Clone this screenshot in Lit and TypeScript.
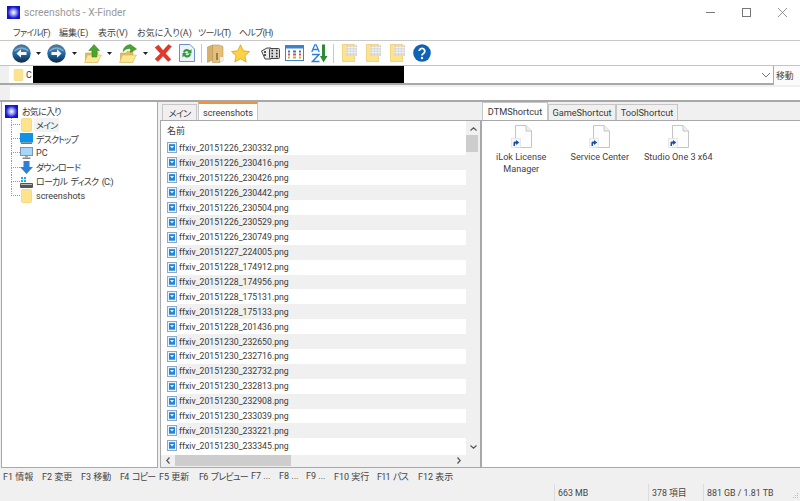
import { LitElement, html, css, svg } from "lit";
import { customElement } from "lit/decorators.js";

const files = [
  "20151226_230332","20151226_230416","20151226_230426","20151226_230442","20151226_230504",
  "20151226_230529","20151226_230749","20151227_224005","20151228_174912","20151228_174956",
  "20151228_175131","20151228_175133","20151228_201436","20151230_232650","20151230_232716",
  "20151230_232732","20151230_232813","20151230_232908","20151230_233039","20151230_233221","20151230_233345",
];

const kanaCls = (s: string) => (/[\u30a0-\u30ff]/.test(s) ? "kana" : "");

const folder = (w = 11, h = 14) => html`<svg width=${w} height=${h} viewBox="0 0 11 14"><rect x=".5" y=".5" width="10" height="13" rx="1" fill="#fde38c" stroke="#f4d98e"/></svg>`;
const logo = html`<svg width="13" height="13" viewBox="0 0 13 13"><defs><radialGradient id="lg"><stop offset="0" stop-color="#fff"/><stop offset=".35" stop-color="#a9b0ff"/><stop offset=".85" stop-color="#2020d8"/><stop offset="1" stop-color="#1414c0"/></radialGradient></defs><rect width="13" height="13" fill="url(#lg)"/></svg>`;
const navBtn = (dir: number) => html`<svg width="19" height="19" viewBox="0 0 19 19"><defs><linearGradient id="nb" x1="0" y1="0" x2="0" y2="1"><stop offset="0" stop-color="#54718c"/><stop offset=".25" stop-color="#3f7fb4"/><stop offset=".6" stop-color="#1d5f98"/><stop offset="1" stop-color="#10283f"/></linearGradient></defs><circle cx="9.500" cy="9.500" r="9.200" fill="url(#nb)"/><path d="M2.500 7Q9.500 1 16.500 7" fill="none" stroke="#b4cde0" stroke-width="1.300" opacity=".6"/><g transform=${dir < 0 ? "" : "rotate(180 9.500 9.500)"}><path d="M4.500 9.500L9 5.300V7.900H14.500V11.100H9V13.700Z" fill="#f4f8fc"/></g></svg>`;
const caret = html`<svg width="5" height="3" viewBox="0 0 5 3"><path d="M0 0H5L2.500 3Z" fill="#222"/></svg>`;
const folderArrow = (up: boolean) => html`<svg width="18" height="19" viewBox="0 0 18 19"><path d="M1.500 9H7L8 7.500H14V18H1.500Z" fill="#e8bf58" stroke="#b8953f" stroke-width=".5"/><path d="M3.500 11H17.500L13.500 18.500H.5Z" fill="#fbe894" stroke="#cfab4a" stroke-width=".5"/>${up ? svg`<path d="M10 .5L15.500 6.500H12.800V13H8V6.500H4.800Z" fill="#4aa52d" stroke="#2e7d1b" stroke-width=".5"/>` : svg`<path d="M17.500 5L11.500 .5Q5 1 4 7.500Q7 4 11.500 4.500V8.500Z" fill="#4aa52d" stroke="#2e7d1b" stroke-width=".5"/>`}</svg>`;
const gridFolder = html`<svg width="15" height="18" viewBox="0 0 15 18"><rect x=".5" y=".5" width="12" height="17" fill="#fde38c" stroke="#f0d488"/><rect x="4.500" y="1" width="10.500" height="11" fill="#d2d2d2"/><path d="M7 1V12M10 1V12M13 1V12M4.500 3.500H15M4.500 6H15M4.500 8.500H15" stroke="#f3f3f3" stroke-width=".8"/></svg>`;
const png = html`<svg width="10" height="11" viewBox="0 0 10 11"><rect x=".5" y=".5" width="9" height="10" fill="#eef4fa" stroke="#8fa9c4"/><rect x="2" y="2.200" width="6" height="6.500" fill="#1f86de"/><path d="M3 4H7L5 6.500Z" fill="#e8f4ff"/></svg>`;
const shortcut = html`<svg width="21" height="23" viewBox="0 0 21 23"><path d="M4.500 .5H15L20.500 6V22.500H4.500Z" fill="#fdfdfd" stroke="#c4c4c4"/><path d="M15 .5V6H20.500" fill="#f0f0f0" stroke="#c4c4c4"/><rect x=".5" y="13.500" width="9" height="9" fill="#f6f6f6" stroke="#dcdcdc" stroke-width=".6"/><path d="M2.500 21V17.800Q2.500 16.500 4.300 16.500H5V15L8.300 17.500L5 20V18.500H4.500Q4 18.500 4 19.300V21Z" fill="#18509f"/></svg>`;

const stop = html`<svg width="18" height="18" viewBox="0 0 18 18"><path d="M1 3.500L4.500 1L9 6.500L14.500 .5L17.500 2.500L11.500 9.500L17 15.500L14 17.500L9 12L4 17.500L1 15L6.500 9.500Z" fill="#e1382a" stroke="#b8281c" stroke-width=".4"/></svg>`;
const refresh = html`<svg width="16" height="18" viewBox="0 0 16 18"><path d="M.5 .5H11L15.500 5V17.500H.5Z" fill="#eef3fb" stroke="#6d8fc7"/><path d="M4 8A4 4 0 0 1 11 6.500L12.500 5V9.500H8L9.500 8A2.400 2.400 0 0 0 5.500 9Z" fill="#2f9b34"/><path d="M12 10.500A4 4 0 0 1 5 12L3.500 13.500V9H8L6.500 10.500A2.400 2.400 0 0 0 10.500 9.500Z" fill="#2f9b34"/></svg>`;
const book = html`<svg width="17" height="19" viewBox="0 0 17 19"><path d="M.5 3L5.500 1V16L.5 18.500Z" fill="#d8b06a" stroke="#ad8a4a" stroke-width=".5"/><path d="M5.500 1H12L16 2.500V17H13V18.500H5.500Z" fill="#e3c07c" stroke="#ad8a4a" stroke-width=".5"/><path d="M10 9V16" stroke="#6f5528" stroke-width="1.200"/><rect x="13" y="13" width="3.500" height="4" fill="#eee"/></svg>`;
const star = html`<svg width="19" height="19" viewBox="0 0 19 19"><path d="M9.500 .8L12.300 6.800L18.500 7.500L13.900 11.700L15.200 18L9.500 14.800L3.800 18L5.100 11.700L.5 7.500L6.700 6.800Z" fill="#fcd243" stroke="#d99f1d" stroke-width=".8"/></svg>`;
const dice = html`<svg width="19" height="13" viewBox="0 0 19 13"><path d="M.5 4L6 1H10V12H4Z" fill="#eee" stroke="#444"/><rect x="8.500" y="1.500" width="10" height="10" rx="1" fill="#d8d8d8" stroke="#444"/><path d="M10.500 3.500H12M15 3.500H16.500M10.500 6.500H12M15 6.500H16.500M10.500 9.500H12M15 9.500H16.500M3 5H5M3 8H5" stroke="#222" stroke-width="1.500"/></svg>`;
const grid = html`<svg width="19" height="16" viewBox="0 0 19 16"><rect x=".5" y=".5" width="18" height="15" fill="#fff" stroke="#3f82c8"/><rect x=".5" y=".5" width="18" height="3" fill="#3f82c8"/><path d="M3 6.500H5M8 6.500H11M14 6.500H16" stroke="#5b6fb5" stroke-width="2"/><path d="M3 9.500H5M8 9.500H11M14 9.500H16" stroke="#d0564a" stroke-width="2"/><path d="M3 12.500H5M8 12.500H11M14 12.500H16" stroke="#d7a92f" stroke-width="2"/></svg>`;
const az = html`<svg width="17" height="19" viewBox="0 0 17 19"><path d="M.8 8L3.800 .8H5.200L8.200 8M2.200 5.500H6.800" fill="none" stroke="#2f7fd8" stroke-width="1.300"/><path d="M1 10.500H8L1.500 17.500H8.500" fill="none" stroke="#2f7fd8" stroke-width="1.500"/><path d="M11 .5H14V12H16.500L12.500 18.500L9 12H11Z" fill="#2e8b33"/></svg>`;
const help = html`<svg width="18" height="18" viewBox="0 0 18 18"><circle cx="9" cy="9" r="8.800" fill="#0f62b4"/><path d="M6.200 7A2.800 2.800 0 1 1 10.500 9.500Q9 10.300 9 11.500" fill="none" stroke="#fff" stroke-width="1.800"/><circle cx="9" cy="14" r="1.200" fill="#fff"/></svg>`;
const sep = html`<div class="sep"></div>`;

/* toolbar items with the x at which each begins */
const toolItems: [unknown, number, number][] = [
  [navBtn(-1), 12, 19], [caret, 36, 5], [navBtn(1), 47, 19], [caret, 72, 5],
  [folderArrow(true), 84, 18], [caret, 107, 5], [folderArrow(false), 119, 18], [caret, 143, 5],
  [stop, 154, 18], [refresh, 179, 16], [sep, 201, 1], [book, 207, 17], [star, 231, 19],
  [dice, 261, 19], [grid, 285, 19], [az, 311, 17], [sep, 333, 1],
  [gridFolder, 342, 15], [gridFolder, 366, 15], [gridFolder, 390, 15], [help, 413, 18],
];
const fkeys: [string, number][] = [
  ["F1 情報", 39],["F2 変更", 39],["F3 移動", 39],["F4 コピー", 39],["F5 更新", 40],["F6 プレビュー", 52],
  ["F7 ...", 28],["F8 ...", 27],["F9 ...", 28],["F10 実行", 43],["F11 パス", 41],["F12 表示", 40],
];
const menus: [string, number][] = [["ファイル(F)", 46],["編集(E)", 39],["表示(V)", 39],["お気に入り(A)", 61],["ツール(T)", 41],["ヘルプ(H)", 40]];

const ARROW = {
  up: svg`<path d="M.5 3.500L3.500 .8L6.500 3.500" fill="none" stroke="#555" stroke-width="1.200"/>`,
  down: svg`<path d="M.5 .5L3.500 3.200L6.500 .5" fill="none" stroke="#555" stroke-width="1.200"/>`,
  left: svg`<path d="M3.500 .5L.8 3.500L3.500 6.500" fill="none" stroke="#555" stroke-width="1.200"/>`,
  right: svg`<path d="M.5 .5L3.200 3.500L.5 6.500" fill="none" stroke="#555" stroke-width="1.200"/>`,
};

@customElement("app-root")
export class AppRoot extends LitElement {
  static styles = css`
    :host { display: block; width: 800px; height: 501px; background: #f0f0f0; overflow: hidden;
      font-family: Roboto, "Noto Sans CJK JP", sans-serif; font-size: 8.8px; color: #3a3a3a; font-feature-settings: "palt"; }
    svg { display: block; flex: none; }
    .kana { letter-spacing: -.8px; word-spacing: 2px; }
    .title { height: 24px; background: #fff; display: flex; align-items: center; padding-left: 7px; gap: 4px; color: #999; font-size: 10.300px; }
    .winbtns { margin-left: auto; display: flex; align-items: center; padding-right: 13px; gap: 27px; }
    .menu { height: 16px; background: #fff; display: flex; align-items: center; padding-left: 13px; color: #444; border-bottom: 1px solid #c8c8c8; font-size: 9px; white-space: nowrap; }
    .tools { height: 24px; background: #fff; display: flex; align-items: center; }
    .sep { width: 1px; height: 19px; background: #c8c8c8; }
    .addr { height: 20px; border-top: 1px solid #c4c4c4; border-bottom: 2px solid #a8a8a8; display: flex; box-sizing: border-box; padding-left: 9px; }
    .addr-main { flex: 1; background: #fff; display: flex; align-items: center; padding-left: 4px; min-width: 0; }
    .cdrive { margin-left: 2px; width: 7px; }
    .black { width: 371px; height: 17px; background: #000; flex: none; }
    .drop { margin-left: auto; margin-right: 3px; }
    .go { width: 27px; border-left: 1px solid #a8a8a8; margin-bottom: -2px; display: flex; align-items: center; padding-left: 2px; box-sizing: border-box; color: #444; background: #fbfbfb; }
    .addr2 { height: 15px; padding: 2px 0 0 10px; box-sizing: border-box; }
    .addr2 div { height: 13px; background: #fff; }
    .hr { height: 2px; background: #a8a8a8; }
    .panes { display: flex; height: 366px; padding-left: 1px; }
    .tree { background: #fff; border: 1px solid #a8a8a8; border-top: none; padding-top: 3px; box-sizing: border-box; height: 366px; width: 157px; font-size: 9px; }
    .root { display: flex; align-items: center; gap: 4px; height: 13px; margin-left: 3px; }
    .root span { letter-spacing: -.8px; }
    .kid { height: 14.200px; margin-left: 9px; display: flex; align-items: center; }
    .branch { width: 9px; align-self: stretch; display: grid; grid-template-rows: 1fr 1fr; flex: none; }
    .branch i { border-left: 1px dotted #999; }
    .branch i:first-child { border-bottom: 1px dotted #999; }
    .kid.last .branch i:last-child { border-left: none; }
    .ico { width: 13px; margin-right: 1px; display: flex; justify-content: center; flex: none; }
    .lbl { padding: 0 2px; height: 14px; display: flex; align-items: center; white-space: pre; }
    .lbl.sel { background: #f2f2f2; }
    .center { width: 321px; margin-left: 2px; }
    .tabs { display: flex; height: 18px; align-items: flex-end; font-size: 9.200px; }
    .center .tabs { padding-left: 2px; gap: 1px; }
    .tab { height: 16px; display: flex; align-items: center; justify-content: center; border: 1px solid #c6c6c6; border-bottom: none; box-sizing: border-box; }
    .tab.on { background: #fff; height: 18px; }
    .center .tab.on { border-top: 2px solid #f0913c; }
    .list { border: 1px solid #a8a8a8; background: #fff; height: 348px; box-sizing: border-box; display: flex; }
    .left-col { flex: 1; min-width: 0; display: flex; flex-direction: column; }
    .rows { height: 333.500px; overflow: hidden; font-size: 8.700px; }
    .hdr { height: 19.500px; display: flex; align-items: center; padding-left: 6px; font-size: 9px; }
    .row { height: 14.900px; display: flex; align-items: center; padding-left: 6px; white-space: nowrap; }
    .row span { flex: 1; align-self: stretch; display: flex; align-items: center; padding-left: 2px; }
    .row.alt span { background: #f0f0f0; }
    .vs { width: 14px; background: #f0f0f0; display: flex; flex-direction: column; align-items: center; }
    .vs .thumb { width: 12px; height: 17px; background: #cdcdcd; margin: 4px 2px 0 0; }
    .vs .ar { margin-top: 6px; }
    .vs .ar2 { margin-top: auto; margin-bottom: 18px; }
    .hs { flex: 1; background: #f0f0f0; display: flex; align-items: flex-start; }
    .hs .thumb { width: 116px; height: 11px; background: #cdcdcd; margin-left: 5px; }
    .hs .ar { margin: 2px 0 0 5px; }
    .hs .ar2 { margin: 2px 5px 0 auto; }
    .right { flex: 1; min-width: 0; }
    .right .tabs { padding-left: 1px; }
    .rbody { background: #fff; border-top: 1px solid #a8a8a8; border-bottom: 1px solid #a8a8a8; border-left: 1px solid #a8a8a8; height: 348px; box-sizing: border-box; display: flex; padding-top: 4px; }
    .sc { width: 78.500px; display: flex; flex-direction: column; align-items: center; text-align: center; color: #44404a; line-height: 12px; font-size: 9.100px; }
    .sc svg { margin-bottom: 3px; }
    .sc span { display: block; width: 78px; }
    .fkeys { height: 16px; display: flex; align-items: center; padding-left: 3px; white-space: pre; color: #444; font-size: 9px; }
    .status { height: 17px; display: flex; align-items: center; position: relative; padding-left: 554px; color: #444; }
    .st { height: 100%; display: flex; align-items: center; border-left: 1px solid #dcdcdc; padding-left: 3px; box-sizing: border-box; }
    .st1 { width: 94px; } .st2 { width: 55px; }
    .grip { position: absolute; right: 1px; bottom: 1px; }
  `;

  private toolbar() {
    let at = 0;
    return toolItems.map(([tpl, x, w]) => {
      const gap = x - at;
      at = x + w;
      return html`<div style="margin-left:${gap}px">${tpl}</div>`;
    });
  }

  render() {
    const kid = (icon: unknown, label: string, cls = "", lblCls = "") =>
      html`<div class="kid ${cls}"><span class="branch"><i></i><i></i></span><span class="ico">${icon}</span><span class="lbl ${lblCls} ${kanaCls(label)}">${label}</span></div>`;
    return html`
      <div class="title">${logo}<span>screenshots - X-Finder</span>
        <div class="winbtns">
          <svg width="9" height="1" viewBox="0 0 9 1"><rect width="9" height="1" fill="#777"/></svg>
          <svg width="9" height="9" viewBox="0 0 9 9"><rect x=".5" y=".5" width="8" height="8" fill="none" stroke="#777"/></svg>
          <svg width="9" height="9" viewBox="0 0 9 9"><path d="M0 0L9 9M9 0L0 9" stroke="#777" stroke-width=".8"/></svg>
        </div>
      </div>
      <div class="menu">${menus.map(([m, w]) => html`<span class=${kanaCls(m)} style="width:${w}px">${m}</span>`)}</div>
      <div class="tools">${this.toolbar()}</div>
      <div class="addr">
        <div class="addr-main">${folder(11, 12)}<span class="cdrive">C</span><div class="black"></div>
          <svg class="drop" width="8" height="4" viewBox="0 0 8 4"><path d="M0 0L4 4L8 0" fill="none" stroke="#777"/></svg>
        </div>
        <div class="go">移動</div>
      </div>
      <div class="addr2"><div></div></div>
      <div class="hr"></div>
      <div class="panes">
        <div class="tree">
          <div class="root">${logo}<span>お気に入り</span></div>
          ${kid(folder(), "メイン", "", "sel")}
          ${kid(html`<svg width="13" height="12" viewBox="0 0 13 12"><rect width="13" height="9.500" fill="#0f93e8"/><rect x="1" y="9.500" width="11" height="1.500" fill="#777"/></svg>`, "デスクトップ")}
          ${kid(html`<svg width="13" height="12" viewBox="0 0 13 12"><rect x=".5" y=".5" width="12" height="8" fill="#a5d8f8" stroke="#7f93b5"/><rect x="5" y="9" width="3" height="1.500" fill="#aaa"/><rect x="2.500" y="10.500" width="8" height="1.500" fill="#8a8a8a"/></svg>`, "PC")}
          ${kid(html`<svg width="13" height="13" viewBox="0 0 13 13"><path d="M3.500 0H9.500V6H13L6.500 13L0 6H3.500Z" fill="#2e7fd6"/></svg>`, "ダウンロード")}
          ${kid(html`<svg width="13" height="12" viewBox="0 0 13 12"><rect x="0" y="7" width="13" height="5" rx="1" fill="#555"/><rect x="1" y="8" width="11" height="1" fill="#bbb"/><path d="M1 1H3V3H1ZM4 1H6V3H4ZM1 4H3V6H1ZM4 4H6V6H4Z" fill="#2aa5e8"/></svg>`, "ローカル ディスク (C:)")}
          ${kid(folder(), "screenshots", "last")}
        </div>
        <div class="center">
          <div class="tabs">
            <div class="tab kana" style="width:35px">メイン</div>
            <div class="tab on" style="width:60px">screenshots</div>
          </div>
          <div class="list">
            <div class="left-col">
              <div class="rows">
                <div class="hdr">名前</div>
                ${files.map((f, i) => html`<div class="row ${i % 2 ? "alt" : ""}">${png}<span>ffxiv_${f}.png</span></div>`)}
              </div>
              <div class="hs">
                <svg class="ar" width="4" height="7" viewBox="0 0 4 7">${ARROW.left}</svg>
                <div class="thumb"></div>
                <svg class="ar2" width="4" height="7" viewBox="0 0 4 7">${ARROW.right}</svg>
              </div>
            </div>
            <div class="vs">
              <svg class="ar" width="7" height="4" viewBox="0 0 7 4">${ARROW.up}</svg>
              <div class="thumb"></div>
              <svg class="ar2" width="7" height="4" viewBox="0 0 7 4">${ARROW.down}</svg>
            </div>
          </div>
        </div>
        <div class="right">
          <div class="tabs">
            <div class="tab on" style="width:66px">DTMShortcut</div>
            <div class="tab" style="width:68px">GameShortcut</div>
            <div class="tab" style="width:62px">ToolShortcut</div>
          </div>
          <div class="rbody">
            <div class="sc">${shortcut}<span>iLok License Manager</span></div>
            <div class="sc">${shortcut}<span>Service Center</span></div>
            <div class="sc">${shortcut}<span>Studio One 3 x64</span></div>
          </div>
        </div>
      </div>
      <div class="fkeys">${fkeys.map(([k, w]) => html`<span class=${kanaCls(k)} style="width:${w}px">${k}</span>`)}</div>
      <div class="status">
        <div class="st st1">663 MB</div>
        <div class="st st2">378 項目</div>
        <div class="st">881 GB / 1.81 TB</div>
        <svg class="grip" width="8" height="8" viewBox="0 0 8 8"><path d="M6 1h1v1H6zM4 3h1v1H4zM6 3h1v1H6zM2 5h1v1H2zM4 5h1v1H4zM6 5h1v1H6z" fill="#bbb"/></svg>
      </div>
    `;
  }
}
